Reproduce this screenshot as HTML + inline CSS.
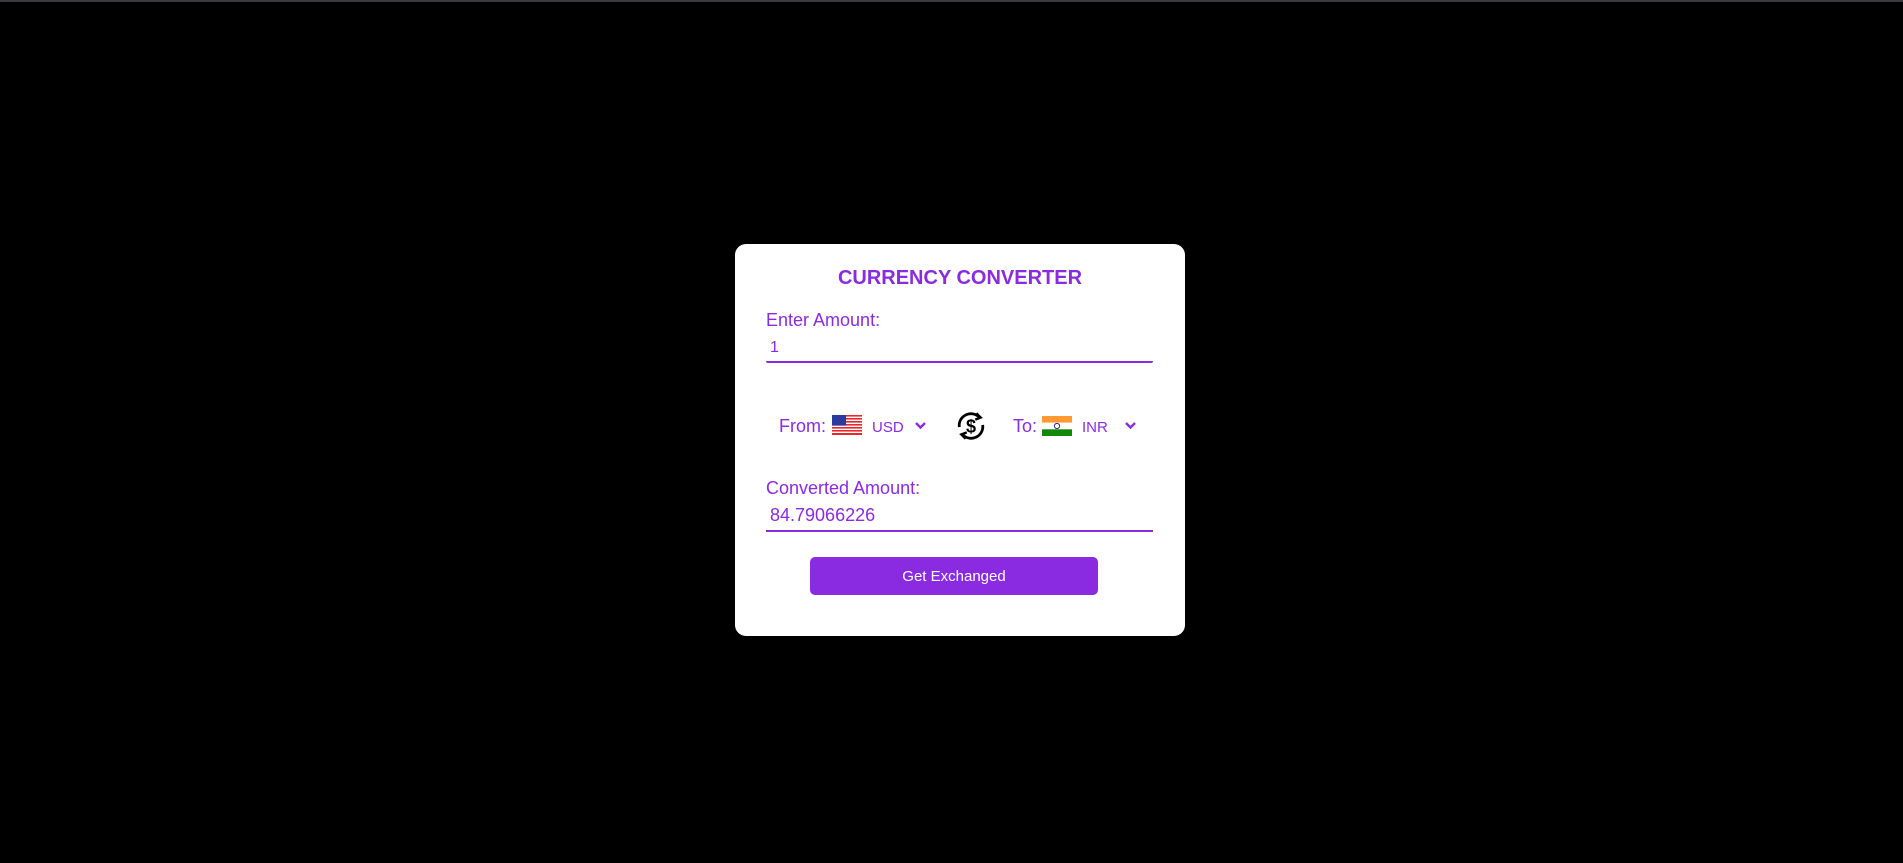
<!DOCTYPE html>
<html><head><meta charset="utf-8"><style>
html,body{margin:0;padding:0;background:#000;width:1903px;height:863px;overflow:hidden;font-family:"Liberation Sans",sans-serif;}
.top{position:absolute;left:0;top:0;width:1903px;height:2px;background:#3a3a40;}
.card{position:absolute;left:735px;top:244px;width:450px;height:392px;background:#fff;border-radius:11px;}
.a{position:absolute;color:#8a2be2;white-space:nowrap;}
.line{position:absolute;height:2px;background:#8a2be2;}
.btn{position:absolute;left:810px;top:557px;width:288px;height:38px;background:#8a2be2;border-radius:5px;color:#fff;font-size:15px;text-align:center;line-height:39px;}
</style></head><body>
<div class="top"></div>
<div class="card"></div>
<div class="a" style="left:735px;width:450px;text-align:center;top:267px;font-size:20px;font-weight:bold;">CURRENCY CONVERTER</div>
<div class="a" style="left:766px;top:310px;font-size:18px;">Enter Amount:</div>
<div class="a" style="left:770px;top:339px;font-size:16px;">1</div>
<div class="line" style="left:766px;top:361px;width:387px;border-radius:0 0 4px 4px;"></div>

<div class="a" style="left:779px;top:416px;font-size:18px;">From:</div>
<svg style="position:absolute;left:832px;top:415px" width="30" height="20" viewBox="0 0 30 20">
<rect width="30" height="20" fill="#fff"/>
<g fill="#e8262b"><rect y="0" width="30" height="1.6"/><rect y="3" width="30" height="1.6"/><rect y="6" width="30" height="1.6"/><rect y="9" width="30" height="1.6"/><rect y="12" width="30" height="1.6"/><rect y="15" width="30" height="1.6"/><rect y="18" width="30" height="2"/></g>
<rect width="14" height="10.6" fill="#2a3a9e"/></svg>
<div class="a" style="left:872px;top:419px;font-size:15px;">USD</div>
<svg style="position:absolute;left:914px;top:421px" width="13" height="9" viewBox="0 0 13 9"><path d="M2 2 L6.5 6.5 L11 2" fill="none" stroke="#8a2be2" stroke-width="2.4"/></svg>

<svg style="position:absolute;left:954px;top:409px" width="34" height="34" viewBox="0 0 32 32" fill="none" stroke="#000" stroke-width="2.6">
<path d="M5 17 A11 11 0 0 1 24 8"/><path d="M27 15 A11 11 0 0 1 8 24"/>
<path d="M21 4 L25 8 L20 10" stroke-width="2.4"/><path d="M11 28 L7 24 L12 22" stroke-width="2.4"/>
<text x="16" y="22" text-anchor="middle" font-size="17" font-weight="bold" font-family="Liberation Sans" fill="#000" stroke="none">$</text>
</svg>

<div class="a" style="left:1013px;top:416px;font-size:18px;">To:</div>
<svg style="position:absolute;left:1042px;top:416px" width="30" height="20" viewBox="0 0 30 20">
<rect width="30" height="6.7" fill="#ff9a33"/><rect y="6.7" width="30" height="6.6" fill="#fff"/><rect y="13.3" width="30" height="6.7" fill="#138808"/>
<circle cx="15" cy="10" r="2.6" fill="none" stroke="#2a2a8c" stroke-width="1"/></svg>
<div class="a" style="left:1082px;top:419px;font-size:15px;">INR</div>
<svg style="position:absolute;left:1124px;top:421px" width="13" height="9" viewBox="0 0 13 9"><path d="M2 2 L6.5 6.5 L11 2" fill="none" stroke="#8a2be2" stroke-width="2.4"/></svg>

<div class="a" style="left:766px;top:478px;font-size:18px;">Converted Amount:</div>
<div class="a" style="left:770px;top:505px;font-size:18px;">84.79066226</div>
<div class="line" style="left:766px;top:530px;width:387px;"></div>

<div class="btn">Get Exchanged</div>
</body></html>
